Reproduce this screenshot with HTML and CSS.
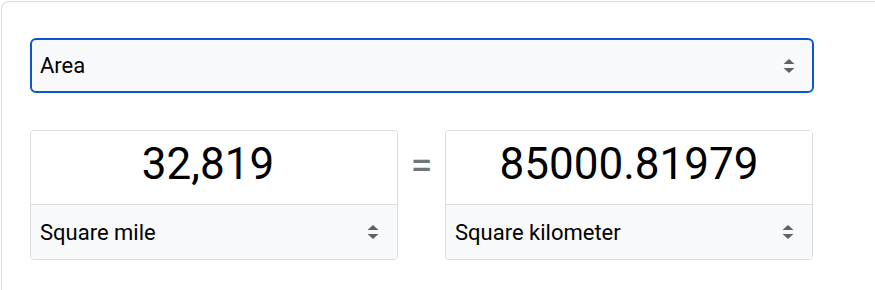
FILE: index.html
```html
<!DOCTYPE html>
<html lang="en">
<head>
  <meta charset="UTF-8" />
  <meta name="viewport" content="width=device-width, initial-scale=1.0"/>
  <title>Unit converter</title>
  <link rel="stylesheet" href="styles.css">
</head>
<body>
  <div class="card">
    <div class="select select-main">
      <span>Area</span>
      <svg class="arrows" width="12" height="14" viewBox="0 0 12 14"><path d="M6 0 L11.5 5 L0.5 5 Z M0.5 9 L11.5 9 L6 14 Z" fill="#5f6368"/></svg>
    </div>

    <div class="row">
      <div class="unit-box">
        <div class="value value-from">32,819</div>
        <div class="select select-unit">
          <span>Square mile</span>
          <svg class="arrows" width="12" height="14" viewBox="0 0 12 14"><path d="M6 0 L11.5 5 L0.5 5 Z M0.5 9 L11.5 9 L6 14 Z" fill="#5f6368"/></svg>
        </div>
      </div>
      <div class="equals">=</div>
      <div class="unit-box">
        <div class="value">85000.81979</div>
        <div class="select select-unit">
          <span>Square kilometer</span>
          <svg class="arrows" width="12" height="14" viewBox="0 0 12 14"><path d="M6 0 L11.5 5 L0.5 5 Z M0.5 9 L11.5 9 L6 14 Z" fill="#5f6368"/></svg>
        </div>
      </div>
    </div>
  </div>
</body>
</html>
```

FILE: styles.css
```css
html, body {
  height: 100%;
}
body {
  margin: 0;
  padding: 1px 0 0 1px;
  box-sizing: border-box;
  font-family: Roboto, Arial, sans-serif;
  color: #000;
  background: #fff;
}
.card {
  height: 100%;
  border: 1px solid #dadce0;
  border-right: none;
  border-bottom: none;
  border-top-left-radius: 8px;
  padding: 36px 0 0 28px;
  box-sizing: border-box;
}
.select {
  display: flex;
  align-items: center;
  justify-content: space-between;
  background: #f8f9fa;
  font-size: 22px;
  box-sizing: border-box;
}
.select-main {
  width: 784px;
  height: 55px;
  border: 2px solid #0b57d0;
  border-radius: 6px;
  padding: 0 17px 0 8px;
}
.row {
  display: flex;
  align-items: flex-start;
  margin-top: 37px;
}
.unit-box {
  width: 368px;
  height: 130px;
  border: 1px solid #dadce0;
  border-radius: 4px;
  box-sizing: border-box;
  display: flex;
  flex-direction: column;
  overflow: hidden;
}
.value {
  height: 74px;
  padding-bottom: 8px;
  box-sizing: border-box;
  border-bottom: 1px solid #dadce0;
  display: flex;
  align-items: center;
  justify-content: center;
  font-size: 44px;
  background: #fff;
}
.value-from {
  padding-right: 12px;
}
.select-unit {
  flex: 1;
  padding: 0 18px 0 9px;
}
.equals {
  width: 47px;
  text-align: center;
  font-size: 40px;
  color: #70757a;
  line-height: 72px;
}
```
